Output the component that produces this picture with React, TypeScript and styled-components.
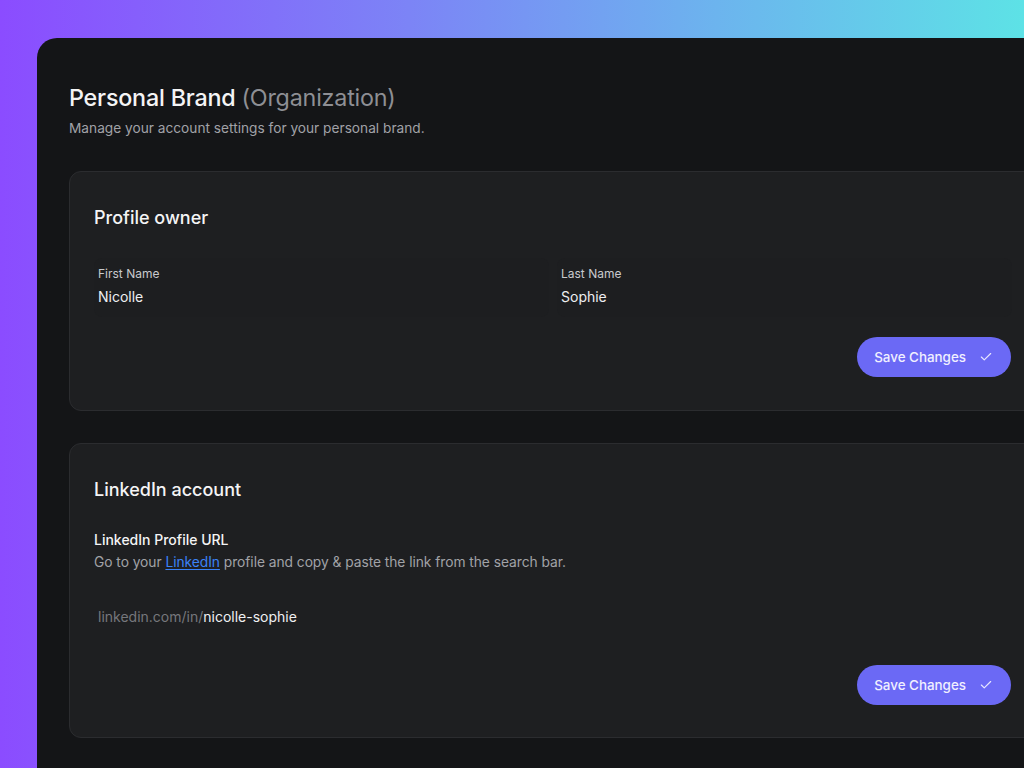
import React from "react";
import styled, { createGlobalStyle } from "styled-components";

const Global = createGlobalStyle`
  html, body { margin: 0; padding: 0; }
  body {
    width: 1024px;
    height: 768px;
    overflow: hidden;
    font-family: Inter, "Noto Sans", sans-serif;
    -webkit-font-smoothing: antialiased;
  }
  * { box-sizing: border-box; }
`;

const Backdrop = styled.div`
  width: 1024px;
  height: 768px;
  overflow: hidden;
  background: linear-gradient(90deg, #8b4cff 0%, #7c84f6 40%, #6cb4ee 70%, #5de2e6 100%);
  padding: 38px 0 0 37px;
`;

const Panel = styled.main`
  width: 1040px;
  min-height: 760px;
  background: #141517;
  border-radius: 20px 0 0 0;
  padding: 44px 0 0 32px;
`;

const Title = styled.h1`
  margin: 0;
  font-size: 23.3px;
  line-height: 32px;
  font-weight: 500;
  color: #f4f4f5;
  letter-spacing: -0.2px;
`;

const Muted = styled.span`
  color: #8e8f94;
  font-weight: 400;
`;

const Subtitle = styled.p`
  margin: 4px 0 0;
  font-size: 13.7px;
  line-height: 20px;
  color: #a1a2a7;
`;

const Card = styled.section<{ $gap?: number; $bottom?: number }>`
  width: 968px;
  margin-top: ${(p) => p.$gap ?? 32}px;
  background: #1e1f21;
  border: 1px solid #2b2c2f;
  border-radius: 12px;
  padding: 32px 24px ${(p) => p.$bottom ?? 32}px 24px;
`;

const CardTitle = styled.h2`
  margin: 0;
  font-size: 18px;
  line-height: 28px;
  font-weight: 500;
  color: #f4f4f5;
`;

const FieldGrid = styled.div`
  display: grid;
  grid-template-columns: 1fr 1fr;
  gap: 8px;
  margin-top: 26px;
`;

const Field = styled.div`
  display: flex;
  flex-direction: column;
  padding: 8px 4px 10px;
  border-radius: 8px;
  background: #1d1e20;
`;

const Label = styled.label`
  font-size: 12px;
  line-height: 16px;
  color: #c9cacd;
  margin-bottom: 5px;
`;

const Value = styled.div`
  font-size: 14px;
  line-height: 20px;
  color: #eeeef0;
`;

const Actions = styled.div<{ $top: number }>`
  display: flex;
  justify-content: flex-end;
  margin-top: ${(p) => p.$top}px;
`;

const SaveButton = styled.button`
  display: inline-flex;
  align-items: center;
  gap: 13px;
  height: 40px;
  padding: 0 18px 0 17px;
  margin-right: 1px;
  border: none;
  border-radius: 20px;
  background: #6b69f5;
  color: #f1f0ff;
  font-family: inherit;
  font-size: 13.4px;
  font-weight: 500;
  cursor: pointer;
`;

const SubLabel = styled.div`
  margin-top: 26px;
  font-size: 14px;
  line-height: 20px;
  font-weight: 500;
  color: #f4f4f5;
`;

const Help = styled.p`
  margin: 2px 0 0;
  font-size: 13.8px;
  line-height: 20px;
  color: #a1a2a7;
  letter-spacing: -0.05px;
`;

const Link = styled.a`
  color: #3b82f6;
  text-decoration: underline;
  text-underline-offset: 2px;
`;

const UrlInput = styled.div`
  margin-top: 35px;
  padding: 0 4px;
  font-size: 14px;
  line-height: 20px;
`;

const Prefix = styled.span`
  color: #76777c;
`;

const Handle = styled.span`
  color: #f0f0f2;
`;

const Check = () => (
  <svg width="14" height="14" viewBox="0 0 24 24" fill="none" stroke="#e8e7ff" strokeWidth="2" strokeLinecap="round" strokeLinejoin="round">
    <path d="M20 6 9 17l-5-5" />
  </svg>
);

export default function App() {
  return (
    <>
      <Global />
      <Backdrop>
        <Panel>
          <Title>
            Personal Brand <Muted>(Organization)</Muted>
          </Title>
          <Subtitle>Manage your account settings for your personal brand.</Subtitle>

          <Card $gap={33} $bottom={33}>
            <CardTitle>Profile owner</CardTitle>
            <FieldGrid>
              <Field>
                <Label>First Name</Label>
                <Value>Nicolle</Value>
              </Field>
              <Field>
                <Label>Last Name</Label>
                <Value>Sophie</Value>
              </Field>
            </FieldGrid>
            <Actions $top={20}>
              <SaveButton>
                Save Changes <Check />
              </SaveButton>
            </Actions>
          </Card>

          <Card $gap={32}>
            <CardTitle>LinkedIn account</CardTitle>
            <SubLabel>LinkedIn Profile URL</SubLabel>
            <Help>
              Go to your <Link href="#">LinkedIn</Link> profile and copy &amp; paste the link from the search bar.
            </Help>
            <UrlInput>
              <Prefix>linkedin.com/in/</Prefix>
              <Handle>nicolle-sophie</Handle>
            </UrlInput>
            <Actions $top={38}>
              <SaveButton>
                Save Changes <Check />
              </SaveButton>
            </Actions>
          </Card>
        </Panel>
      </Backdrop>
    </>
  );
}
